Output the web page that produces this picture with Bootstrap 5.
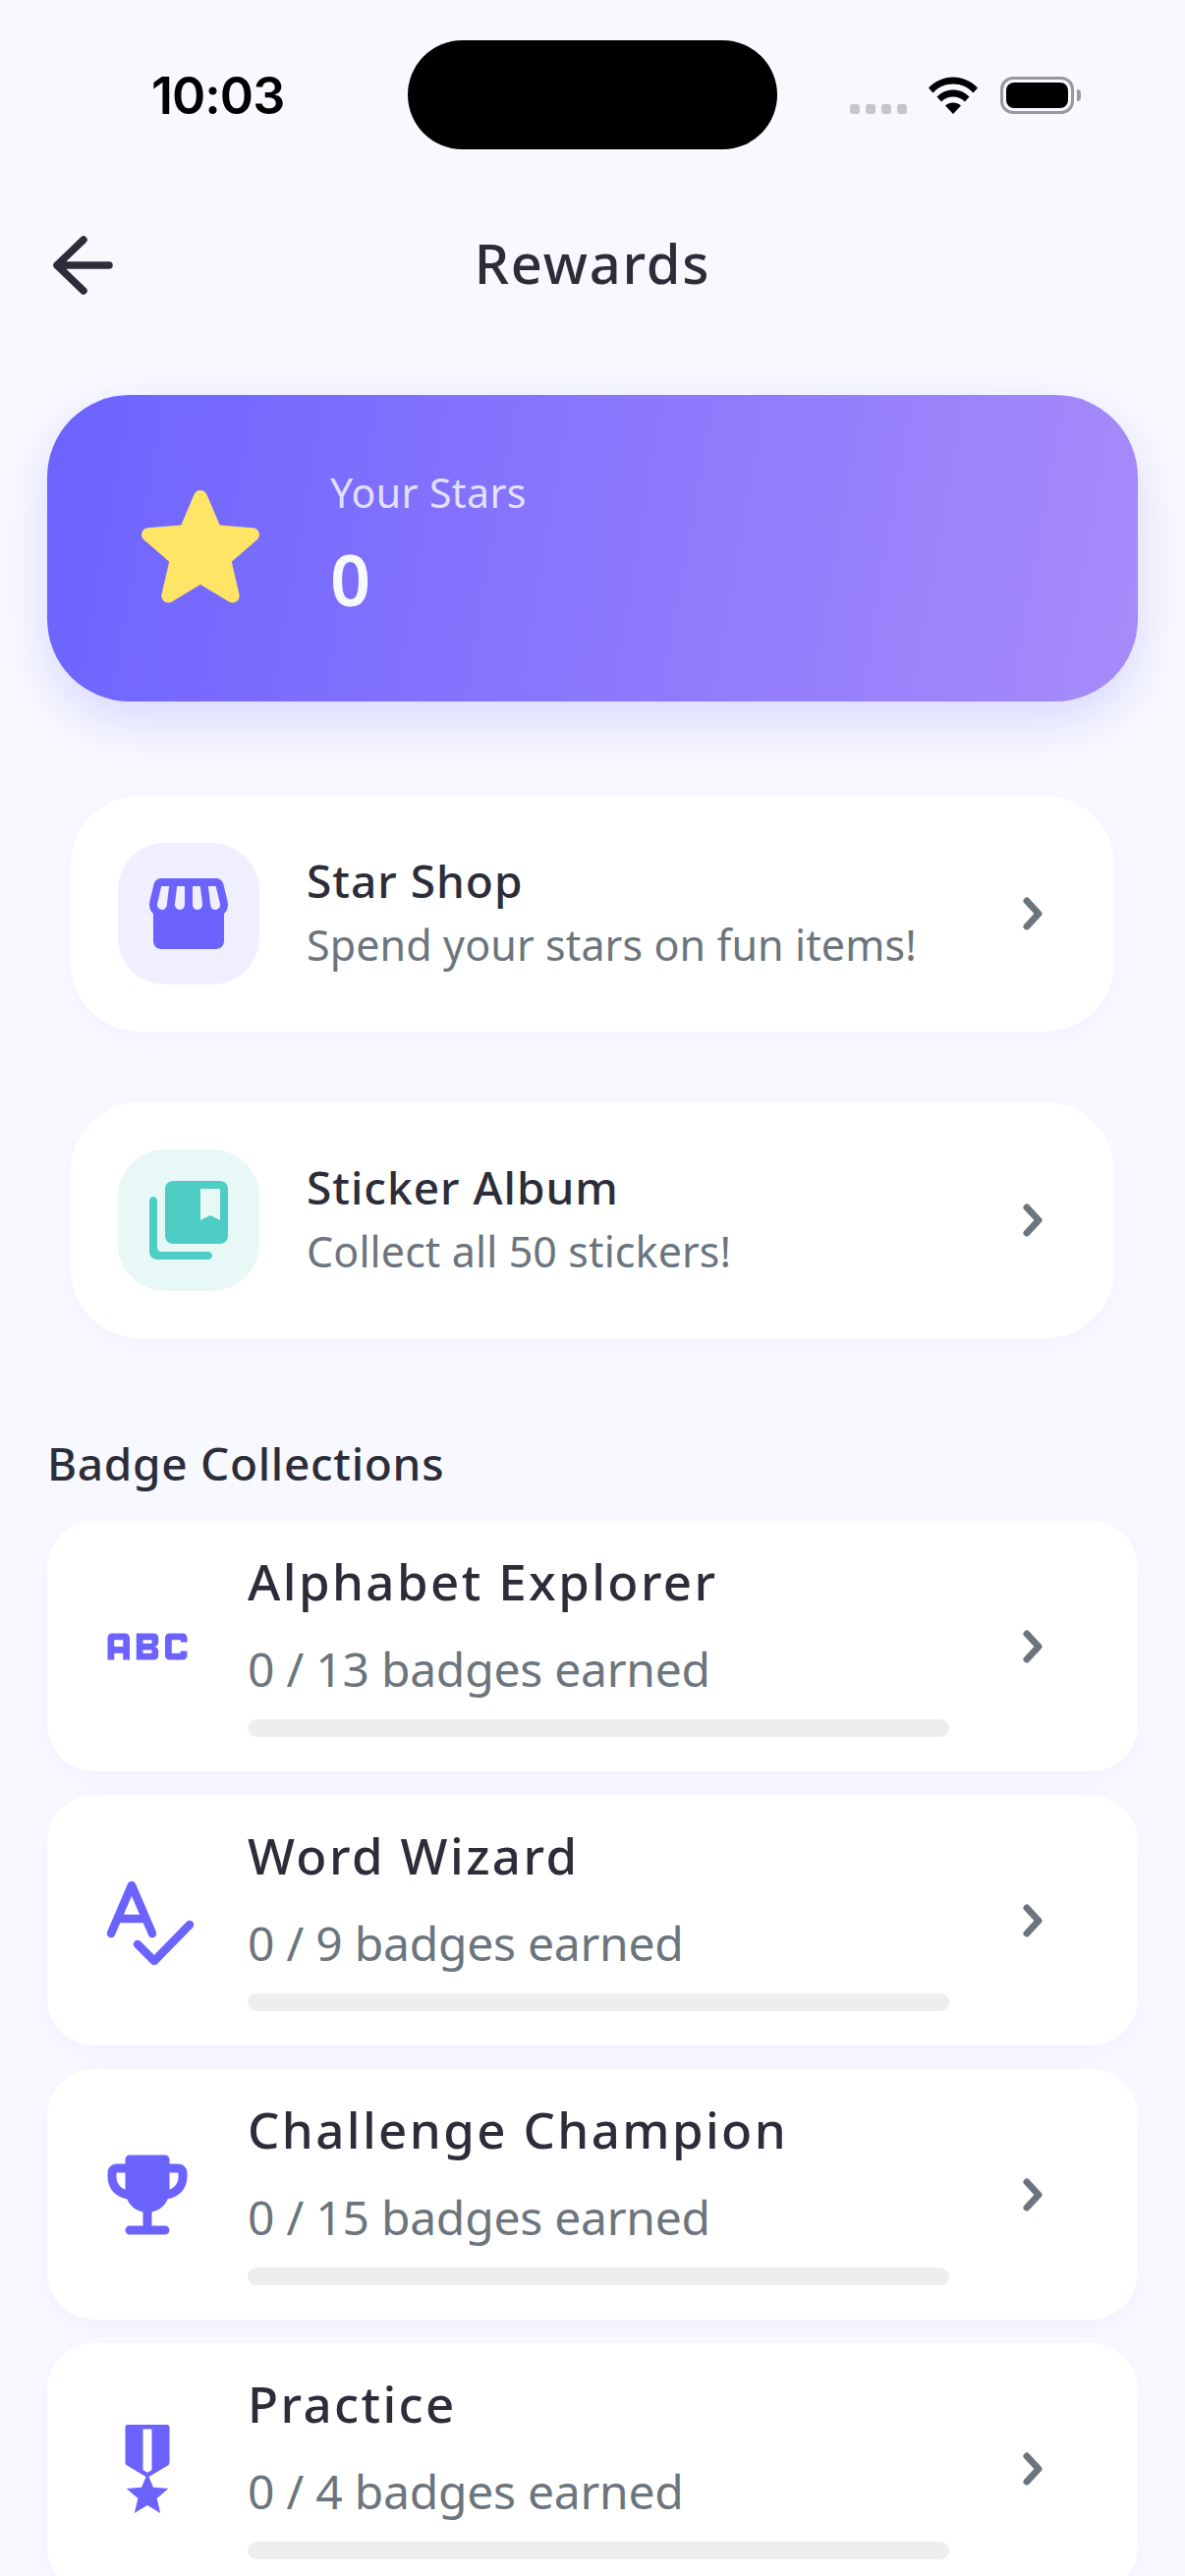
<!DOCTYPE html>
<html lang="en">

<head>
    <meta charset="UTF-8">
    <meta name="viewport" content="width=device-width, initial-scale=1.0">
    <title>Rewards</title>
    <link href="https://cdn.jsdelivr.net/npm/bootstrap@5.3.3/dist/css/bootstrap.min.css" rel="stylesheet">
    <style>
        html, body {
            height: 100%;
            overflow: hidden;
        }

        body {
            background-color: #F8F9FF;
            color: #2D2D3A;
            font-family: "Noto Sans", "Lato", sans-serif;
        }

        /* status bar */
        .status-row {
            height: 152px;
            padding-top: 41px;
            padding-left: 154px;
        }

        .status-time {
            width: 261px;
            height: 111px;
            font-family: "Inter", sans-serif;
            font-size: 52px;
            font-weight: 600;
            line-height: 113px;
            letter-spacing: -1px;
            color: #000;
        }

        .island {
            width: 376px;
            height: 111px;
            border-radius: 56px;
            background: #000;
        }

        .status-icons {
            margin-left: 74px;
            height: 111px;
            padding-top: 37px;
        }

        .sig-dot {
            width: 10px;
            height: 10px;
            margin-right: 6px;
            margin-top: 28px;
            border-radius: 3px;
            background: #C5C6CB;
        }

        .batt {
            width: 75px;
            height: 38px;
            margin-left: 23px;
            padding: 3px;
            border: 3px solid #98989E;
            border-radius: 13px;
        }

        .batt-fill {
            height: 100%;
            border-radius: 8px;
            background: #000;
        }

        .batt-tip {
            width: 4px;
            height: 12px;
            margin-left: 3px;
            margin-top: 13px;
            border-radius: 0 4px 4px 0;
            background: #98989E;
        }

        /* header */
        .top-head {
            height: 60px;
            margin-top: 88px;
            padding-left: 48px;
        }

        .top-title {
            left: 0;
            right: 0;
            top: 0;
            font-size: 56px;
            font-weight: 500;
            line-height: 54px;
            letter-spacing: 1.800px;
            color: #2D2D3A;
        }

        /* stars card */
        .hero-box {
            height: 312px;
            margin: 102px 48px 0;
            padding-left: 72px;
            gap: 48px;
            border-radius: 84px;
            background: linear-gradient(100deg, #6C63FF 0%, #A78BFA 100%);
            box-shadow: 0 20px 50px rgba(108, 99, 255, .22);
        }

        .hero-text {
            padding-bottom: 15px;
        }

        .hero-label {
            font-size: 41px;
            line-height: 50px;
            letter-spacing: .4px;
            color: rgba(255, 255, 255, .8);
        }

        .hero-count {
            margin-top: 27px;
            font-size: 72px;
            font-weight: 600;
            line-height: 72px;
            color: #F8F9FF;
        }

        /* star shop and sticker album */
        .shop-item {
            height: 240px;
            margin: 0 72px;
            padding: 0 48px;
            gap: 48px;
            border: 0;
            border-radius: 70px;
            background: #fff;
            box-shadow: 0 6px 24px rgba(108, 99, 255, .05);
        }

        .shop-first {
            margin-top: 96px;
        }

        .shop-next {
            margin-top: 72px;
        }

        .shop-ico {
            width: 144px;
            height: 144px;
            border-radius: 48px;
        }

        .tint-violet {
            background: #F0EFFF;
        }

        .tint-teal {
            background: #E8F8F7;
        }

        .shop-text {
            padding-bottom: 3px;
        }

        .shop-name {
            font-size: 46px;
            font-weight: 500;
            line-height: 50px;
            letter-spacing: 1px;
        }

        .shop-desc {
            margin-top: 16px;
            font-size: 43px;
            line-height: 50px;
            letter-spacing: .1px;
            color: #6C757D;
        }

        .chev {
            width: 72px;
            height: 72px;
        }

        /* badge collections */
        .section-name {
            margin: 97px 48px 0;
            font-size: 46px;
            font-weight: 500;
            line-height: 60px;
            letter-spacing: .7px;
        }

        .badge-list {
            margin-top: 29px;
            gap: 24px;
            padding: 0 48px;
        }

        .badge-item {
            height: 255px;
            padding: 0 72px 0 48px;
            gap: 48px;
            border: 0;
            border-radius: 48px;
            background: #fff;
            box-shadow: 0 6px 24px rgba(108, 99, 255, .06);
        }

        .badge-ico {
            width: 108px;
            height: 108px;
        }

        .badge-name {
            font-size: 51px;
            font-weight: 500;
            line-height: 50px;
            letter-spacing: 2.400px;
        }

        .badge-count {
            margin-top: 41px;
            font-size: 48px;
            line-height: 48px;
            letter-spacing: -.25px;
            color: #6C757D;
        }

        .badge-bar {
            height: 18px;
            margin-top: 27px;
            border-radius: 9px;
            background: #ECEEEF;
        }

        .ico-violet {
            fill: #6C63FF;
        }
    </style>
</head>

<body>
    <div class="status-row d-flex">
        <div class="status-time">10:03</div>
        <div class="island"></div>
        <div class="status-icons d-flex">
            <div class="sig-dot"></div>
            <div class="sig-dot"></div>
            <div class="sig-dot"></div>
            <div class="sig-dot"></div>
            <svg class="ms-3" width="50" height="38" viewBox="0 0 50 38">
                <path d="M0 11.5C6.5 4.5 15.500 .5 25 .5s18.500 4 25 11l-4.500 5C40 10.500 33 7.500 25 7.500S10 10.500 4.500 16.500z" />
                <path d="M8.500 20.500C13 16 18.500 13.500 25 13.500s12 2.500 16.500 7L37 25.500C33.500 22 29.500 20.500 25 20.500s-8.500 1.500-12 5z" />
                <path d="M17 29.500c2.200-2 5-3 8-3s5.800 1 8 3L25 38z" />
            </svg>
            <div class="batt">
                <div class="batt-fill"></div>
            </div>
            <div class="batt-tip"></div>
        </div>
    </div>

    <div class="top-head position-relative">
        <svg width="68" height="60" viewBox="0 0 68 60" fill="none" stroke="#2D2D3A" stroke-width="7.500" stroke-linecap="round" stroke-linejoin="round">
            <path d="M37 4L10 30l27 26M10 30h53" />
        </svg>
        <div class="top-title position-absolute text-center">Rewards</div>
    </div>

    <div class="hero-box d-flex align-items-center">
        <svg width="168" height="168" viewBox="0 0 24 24" fill="#FFE566">
            <path d="M12 17.270l4.150 2.510c.76.46 1.690-.22 1.490-1.080l-1.100-4.720 3.670-3.180c.67-.58.31-1.680-.57-1.750l-4.830-.41-1.890-4.460c-.34-.81-1.500-.81-1.840 0L9.190 8.630l-4.830.41c-.88.07-1.240 1.170-.57 1.750l3.670 3.180-1.100 4.720c-.2.86.73 1.540 1.490 1.080l4.150-2.500z" />
        </svg>
        <div class="hero-text">
            <div class="hero-label">Your Stars</div>
            <div class="hero-count">0</div>
        </div>
    </div>

    <div class="card shop-item shop-first flex-row align-items-center">
        <div class="shop-ico tint-violet d-flex align-items-center justify-content-center flex-shrink-0">
            <svg class="ico-violet" width="96" height="96" viewBox="0 0 24 24" fill-rule="evenodd">
                <path d="M21.900 8.890l-1.050-4.370c-.22-.9-1-1.520-1.910-1.520H5.050c-.9 0-1.690.63-1.900 1.520L2.100 8.890c-.24 1.020-.02 2.060.62 2.880.08.11.19.19.28.29V19c0 1.100.9 2 2 2h14c1.100 0 2-.9 2-2v-6.940c.09-.09.2-.18.28-.28.64-.82.87-1.870.62-2.890zm-2.990-3.900l1.050 4.370c.1.42.01.84-.25 1.170-.14.18-.44.47-.94.47-.61 0-1.140-.49-1.210-1.140L16.980 5l1.930-.01zM13 5h1.960l.54 4.520c.05.39-.07.78-.33 1.070-.22.26-.54.41-.95.41-.67 0-1.220-.59-1.220-1.310V5zM8.490 9.520L9.040 5H11v4.690c0 .72-.55 1.310-1.290 1.310-.34 0-.65-.15-.89-.41-.25-.29-.37-.68-.33-1.070zm-4.450-.16L5.050 5h1.970l-.58 4.860c-.08.65-.6 1.140-1.210 1.140-.49 0-.8-.29-.93-.47-.27-.32-.36-.75-.26-1.170z" />
            </svg>
        </div>
        <div class="shop-text flex-grow-1">
            <div class="shop-name">Star Shop</div>
            <div class="shop-desc">Spend your stars on fun items!</div>
        </div>
        <svg class="chev flex-shrink-0" viewBox="0 0 72 72" fill="none" stroke="#6C757D" stroke-width="7" stroke-linecap="round" stroke-linejoin="round">
            <path d="M31 23l12 13-12 13" />
        </svg>
    </div>

    <div class="card shop-item shop-next flex-row align-items-center">
        <div class="shop-ico tint-teal d-flex align-items-center justify-content-center flex-shrink-0">
            <svg width="96" height="96" viewBox="0 0 24 24" fill="#4ECDC4" fill-rule="evenodd">
                <path d="M3 6c-.55 0-1 .45-1 1v13c0 1.100.9 2 2 2h13c.55 0 1-.45 1-1s-.45-1-1-1H5c-.55 0-1-.45-1-1V7c0-.55-.45-1-1-1zm17-4H8c-1.100 0-2 .9-2 2v12c0 1.100.9 2 2 2h12c1.100 0 2-.9 2-2V4c0-1.100-.9-2-2-2zm0 10l-2.500-1.250L15 12V4h5v8z" />
            </svg>
        </div>
        <div class="shop-text flex-grow-1">
            <div class="shop-name">Sticker Album</div>
            <div class="shop-desc">Collect all 50 stickers!</div>
        </div>
        <svg class="chev flex-shrink-0" viewBox="0 0 72 72" fill="none" stroke="#6C757D" stroke-width="7" stroke-linecap="round" stroke-linejoin="round">
            <path d="M31 23l12 13-12 13" />
        </svg>
    </div>

    <div class="section-name">Badge Collections</div>

    <div class="badge-list d-flex flex-column">
        <div class="card badge-item flex-row align-items-center flex-shrink-0">
            <svg class="badge-ico ico-violet flex-shrink-0" viewBox="0 0 24 24" fill-rule="evenodd">
                <path d="M21 11h-1.500v-.5h-2v3h2V13H21v1c0 .55-.45 1-1 1h-3c-.55 0-1-.45-1-1v-4c0-.55.45-1 1-1h3c.55 0 1 .45 1 1v1zM8 10v5H6.500v-1.500h-2V15H3v-5c0-.55.45-1 1-1h3c.55 0 1 .45 1 1zm-1.500.5h-2V12h2v-1.500zm7 1.500c.55 0 1 .45 1 1v1c0 .55-.45 1-1 1h-4V9h4c.55 0 1 .45 1 1v1c0 .55-.45 1-1 1zM11 10.500v.75h2v-.75h-2zm2 2.250h-2v.75h2v-.75z" />
            </svg>
            <div class="flex-grow-1">
                <div class="badge-name">Alphabet Explorer</div>
                <div class="badge-count">0 / 13 badges earned</div>
                <div class="progress badge-bar"></div>
            </div>
            <svg class="chev flex-shrink-0" viewBox="0 0 72 72" fill="none" stroke="#6C757D" stroke-width="7" stroke-linecap="round" stroke-linejoin="round">
                <path d="M31 23l12 13-12 13" />
            </svg>
        </div>

        <div class="card badge-item flex-row align-items-center flex-shrink-0">
            <svg class="badge-ico flex-shrink-0" viewBox="0 0 108 108" fill="none" stroke="#6C63FF" stroke-width="8.500" stroke-linecap="round" stroke-linejoin="round">
                <path d="M17 67L38 18l21 49M25 52h26M44 78l17 17 36-37" />
            </svg>
            <div class="flex-grow-1">
                <div class="badge-name">Word Wizard</div>
                <div class="badge-count">0 / 9 badges earned</div>
                <div class="progress badge-bar"></div>
            </div>
            <svg class="chev flex-shrink-0" viewBox="0 0 72 72" fill="none" stroke="#6C757D" stroke-width="7" stroke-linecap="round" stroke-linejoin="round">
                <path d="M31 23l12 13-12 13" />
            </svg>
        </div>

        <div class="card badge-item flex-row align-items-center flex-shrink-0">
            <svg class="badge-ico ico-violet flex-shrink-0" viewBox="0 0 24 24" fill-rule="evenodd">
                <path d="M19 5h-2V4c0-.55-.45-1-1-1H8c-.55 0-1 .45-1 1v1H5c-1.100 0-2 .9-2 2v1c0 2.550 1.920 4.630 4.390 4.940.63 1.500 1.980 2.630 3.610 2.960V19H8c-.55 0-1 .45-1 1s.45 1 1 1h8c.55 0 1-.45 1-1s-.45-1-1-1h-3v-3.100c1.630-.33 2.980-1.460 3.610-2.960C19.080 12.630 21 10.550 21 8V7c0-1.100-.9-2-2-2zM5 8V7h2v3.820C5.840 10.400 5 9.300 5 8zm14 0c0 1.300-.84 2.400-2 2.820V7h2v1z" />
            </svg>
            <div class="flex-grow-1">
                <div class="badge-name">Challenge Champion</div>
                <div class="badge-count">0 / 15 badges earned</div>
                <div class="progress badge-bar"></div>
            </div>
            <svg class="chev flex-shrink-0" viewBox="0 0 72 72" fill="none" stroke="#6C757D" stroke-width="7" stroke-linecap="round" stroke-linejoin="round">
                <path d="M31 23l12 13-12 13" />
            </svg>
        </div>

        <div class="card badge-item flex-row align-items-center flex-shrink-0">
            <svg class="badge-ico ico-violet flex-shrink-0" viewBox="0 0 24 24" fill-rule="evenodd">
                <path d="M17 10.430V2.500c0-.28-.22-.5-.5-.5h-9c-.28 0-.5.22-.5.500v7.930c0 .35.18.68.49.86l4.180 2.510-.99 2.340-3.410.29 2.590 2.240L9.070 22 12 20.230 14.930 22l-.78-3.330 2.590-2.240-3.410-.29-.99-2.340 4.180-2.510c.3-.18.48-.5.48-.86zm-4 1.800l-1 .6-1-.6V3h2v9.230z" />
            </svg>
            <div class="flex-grow-1">
                <div class="badge-name">Practice</div>
                <div class="badge-count">0 / 4 badges earned</div>
                <div class="progress badge-bar"></div>
            </div>
            <svg class="chev flex-shrink-0" viewBox="0 0 72 72" fill="none" stroke="#6C757D" stroke-width="7" stroke-linecap="round" stroke-linejoin="round">
                <path d="M31 23l12 13-12 13" />
            </svg>
        </div>
    </div>

    <script src="https://cdn.jsdelivr.net/npm/bootstrap@5.3.3/dist/js/bootstrap.bundle.min.js"></script>
</body>

</html>
